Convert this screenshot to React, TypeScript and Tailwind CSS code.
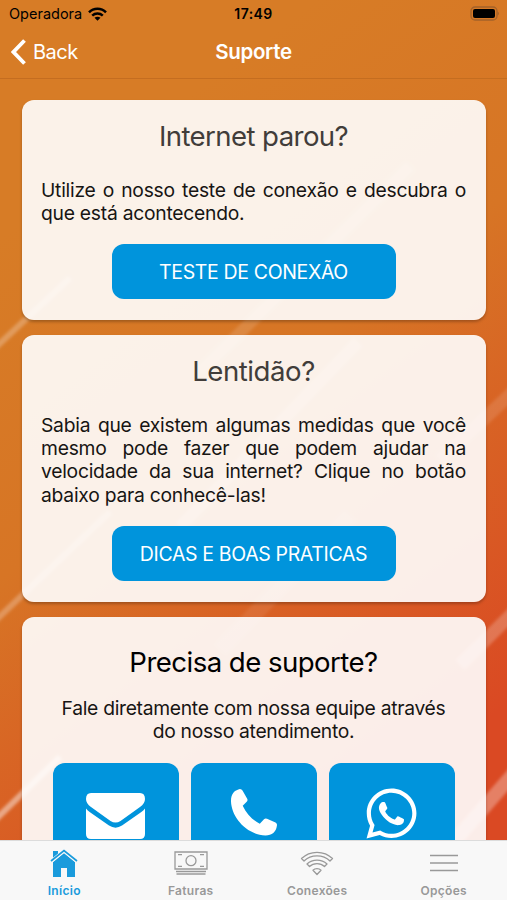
import type { ReactNode } from "react";
import { FaWhatsapp } from "react-icons/fa";

function StatusBar() {
	return (
		<div className="grid h-[27px] grid-cols-3 items-center px-[9px] text-black">
			<div className="flex items-center gap-[6px] text-[14.5px]">
				<span>Operadora</span>
				<svg viewBox="0 0 19 14" className="h-[14px] w-[19px]" fill="none" stroke="currentColor" strokeWidth="2.5">
					<path d="M1 5.3C5.7.6 13.3.6 18 5.3" />
					<path d="M4.2 8.7C7.2 5.9 11.8 5.9 14.8 8.7" />
					<path d="M9.5 13.7 6.5 10.8C8.2 9.4 10.8 9.4 12.5 10.8Z" fill="currentColor" stroke="none" />
				</svg>
			</div>
			<span className="text-center text-[14px] font-semibold tracking-[0.4px]">17:49</span>
			<svg viewBox="0 0 31 15" className="-mt-px mr-[-1px] h-[15px] w-[31px] justify-self-end">
				<rect x="3" y="1" width="26" height="13" rx="4" fill="none" stroke="#a4622a" strokeWidth="1.3" />
				<rect x="5" y="3" width="22" height="9" rx="2" />
				<path d="M29.6 5.4q1.3.4 1.3 2.1t-1.3 2.1z" fill="#a4622a" />
			</svg>
		</div>
	);
}

function Header() {
	return (
		<header className="grid h-[52px] grid-cols-3 items-center border-b border-[#c46d20] px-[11px] pb-[1px] text-white">
			<a href="#" className="flex items-center gap-[7px] text-[20px] tracking-[-0.5px]">
				<svg viewBox="0 0 15 26" className="h-[26px] w-[15px]" fill="none" stroke="currentColor" strokeWidth="3.8">
					<path d="M13.5 1.5 2.5 13l11 11.5" />
				</svg>
				Back
			</a>
			<h1 className="pt-px text-center text-[20.5px] font-semibold tracking-[-0.3px]">Suporte</h1>
		</header>
	);
}

// Diagonal light streaks behind the cards
function Backdrop() {
	return (
		<svg viewBox="0 0 507 840" className="absolute inset-0 h-[840px] w-[507px]">
			<defs>
				<linearGradient id="base" gradientUnits="userSpaceOnUse" x1="130" y1="140" x2="540" y2="680">
					<stop offset="0" stopColor="#d77c26" />
					<stop offset="0.4" stopColor="#d77525" />
					<stop offset="1" stopColor="#da4923" />
				</linearGradient>
				<filter id="soft">
					<feGaussianBlur stdDeviation="1.8" />
				</filter>
			</defs>
			<rect width="507" height="840" fill="url(#base)" />
			<g stroke="#fff" filter="url(#soft)">
				<path d="M-5 348 70 278" strokeWidth="6" strokeOpacity=".25" />
				<path d="M200 372 410 166" strokeWidth="12" strokeOpacity=".13" />
				<path d="M180 527 358 342" strokeWidth="12" strokeOpacity=".18" />
				<path d="M-5 621 110 512" strokeWidth="6" strokeOpacity=".25" />
				<path d="M-5 820 60 757" strokeWidth="6" strokeOpacity=".45" />
				<path d="M440 460 515 390" strokeWidth="13" strokeOpacity=".12" />
				<path d="M220 650 350 515" strokeWidth="16" strokeOpacity=".08" />
				<path d="M460 665 515 611" strokeWidth="13" strokeOpacity=".22" />
				<path d="M450 846 515 772" strokeWidth="14" strokeOpacity=".3" />
			</g>
		</svg>
	);
}

function Card({ children, className = "" }: { children: ReactNode; className?: string }) {
	return (
		<section
			className={`flex shrink-0 flex-col items-center rounded-[12px] bg-white/90 px-[19.5px] shadow-[0_2px_3px_rgba(0,0,0,0.25)] ${className}`}
		>
			{children}
		</section>
	);
}

function ActionButton({ children }: { children: ReactNode }) {
	return (
		<button className="h-[55px] w-[284px] rounded-[12px] bg-[#0094dc] pt-[2px] text-[19.5px] tracking-[-0.35px] text-white">
			{children}
		</button>
	);
}

function ContactButton({ label, children }: { label: string; children: ReactNode }) {
	return (
		<button aria-label={label} className="flex h-[126px] w-[126px] justify-center rounded-[12px] bg-[#0094dc] pt-[26px] text-white">
			{children}
		</button>
	);
}

function Tab({ label, active, children }: { label: string; active?: boolean; children: ReactNode }) {
	return (
		<a href="#" className={`flex flex-1 flex-col items-center pt-[6px] ${active ? "text-[#1a9bdc]" : "text-[#999]"}`}>
			<span className="flex h-[32px] items-center justify-center">{children}</span>
			<span className="mt-[4px] text-[12px] leading-[16px] font-semibold tracking-[0.3px]">{label}</span>
		</a>
	);
}

function TabBar() {
	return (
		<nav className="relative flex h-[60px] border-t border-[#dcdcdc] bg-[#f8f8f8] pl-px">
			<Tab label="Início" active>
				<svg viewBox="0 0 28 28" className="h-[28px] w-[28px]" fill="currentColor">
					<path d="M3 2h5v5L3 11z" />
					<path d="M14 4 25 13V28H17V19H11V28H3V13Z" />
					<path d="M1 12.5 14 2l13 10.5" fill="none" stroke="#f8f8f8" strokeWidth="3.5" />
					<path d="M1 12 14 1.5 27 12" fill="none" stroke="currentColor" strokeWidth="1.7" />
				</svg>
			</Tab>
			<Tab label="Faturas">
				<svg viewBox="0 0 34 26" className="h-[26px] w-[34px]" fill="none" stroke="currentColor" strokeWidth="1.3">
					<path d="M1 2h32v17H1zM2 21.5h30M2.5 24h29" />
					<circle cx="17" cy="10.7" r="5" />
					<path d="M4 4.7h4M26 4.7h4M4 16.3h4M26 16.3h4" />
				</svg>
			</Tab>
			<Tab label="Conexões">
				<svg viewBox="0 0 34 26" className="h-[26px] w-[34px]" fill="none" stroke="currentColor" strokeWidth="1.3" strokeLinejoin="round">
					<path d="M1.5 8.5C10 .2 24 .2 32.5 8.5L30 11C23 4.2 11 4.2 4 11Z" />
					<path d="M7 14C12.5 8.8 21.5 8.8 27 14L24.5 16.5C20.5 12.6 13.5 12.6 9.5 16.5Z" />
					<path d="M13 20.2C15 18 19 18 21 20.2L17 24.5Z" />
				</svg>
			</Tab>
			<Tab label="Opções">
				<svg viewBox="0 0 28 20" className="h-[20px] w-[28px]" fill="none" stroke="currentColor" strokeWidth="1.5">
					<path d="M0 2.5h28M0 10h28M0 17.5h28" />
				</svg>
			</Tab>
		</nav>
	);
}

export default function App() {
	return (
		<div className="relative flex h-[900px] w-[507px] flex-col overflow-hidden bg-[#d77c26] font-['Inter','Liberation_Sans',sans-serif]">
			<Backdrop />
			<div className="relative">
				<StatusBar />
				<Header />
			</div>
			<main className="relative flex min-h-0 flex-1 flex-col gap-[15px] overflow-hidden px-[21.5px] pt-[21px]">
				<Card className="h-[220px]">
					<h2 className="mt-[20px] text-[27.6px] leading-[32px] tracking-[-0.6px] text-[#413d3a]">Internet parou?</h2>
					<p className="mt-[27px] w-full text-justify text-[19.3px] leading-[23.2px] tracking-[-0.25px] text-[#171513]">
						Utilize o nosso teste de conexão e descubra o que está acontecendo.
					</p>
					<div className="mt-[19px]">
						<ActionButton>TESTE DE CONEXÃO</ActionButton>
					</div>
				</Card>
				<Card className="h-[267px]">
					<h2 className="mt-[20px] text-[27.6px] leading-[32px] tracking-[-0.45px] text-[#413d3a]">Lentidão?</h2>
					<p className="mt-[27px] w-full text-justify text-[19.3px] leading-[23.2px] tracking-[-0.25px] text-[#171513]">
						Sabia que existem algumas medidas que você mesmo pode fazer que podem ajudar na velocidade da sua internet? Clique
						no botão abaixo para conhecê-las!
					</p>
					<div className="mt-[19px]">
						<ActionButton>DICAS E BOAS PRATICAS</ActionButton>
					</div>
				</Card>
				<Card className="h-[300px]">
					<h2 className="mt-[29px] text-[27.6px] leading-[32px] tracking-[-0.55px] text-black">Precisa de suporte?</h2>
					<p className="mt-[19px] w-[400px] text-center text-[19.3px] leading-[23.2px] tracking-[-0.3px] text-[#171513]">
						Fale diretamente com nossa equipe através do nosso atendimento.
					</p>
					<div className="mt-[20px] flex gap-[12px]">
						<ContactButton label="E-mail">
							<svg viewBox="0 0 59 46" className="mt-[4px] h-[46px] w-[59px]" fill="currentColor">
								<path d="M5 0H54Q59 0 59 6 59 10.5 54 14L34.5 28Q29.5 31.2 24.5 28L5 14Q0 10.5 0 6 0 0 5 0Z" />
								<path d="M0 15.5Q1.5 17.5 4 19.2L23 32.5Q29.5 36.8 36 32.5L55 19.2Q57.5 17.5 59 15.5V41Q59 46 54 46H5Q0 46 0 41Z" />
							</svg>
						</ContactButton>
						<ContactButton label="Telefone">
							<svg viewBox="0 0 46 47" className="h-[47px] w-[46px]" fill="currentColor">
								<path d="M8 .2Q10.5-.3 11.5 1.6L16.2 9.8Q17 11.4 15.7 12.8L11.7 16.8C15.5 25 21.5 31 28.8 34.8L33 30.2Q34.3 29 36 29.7L44.5 33.6Q46.4 34.6 45.9 36.8C45 43 41 46.5 34.5 46.5 15 45.5 .5 28 0 12.5 -.1 5.5 2.6 1.8 8 .2Z" />
							</svg>
						</ContactButton>
						<ContactButton label="WhatsApp">
							<FaWhatsapp className="-mt-[4px] h-[57px] w-[57px]" />
						</ContactButton>
					</div>
				</Card>
			</main>
			<TabBar />
		</div>
	);
}
